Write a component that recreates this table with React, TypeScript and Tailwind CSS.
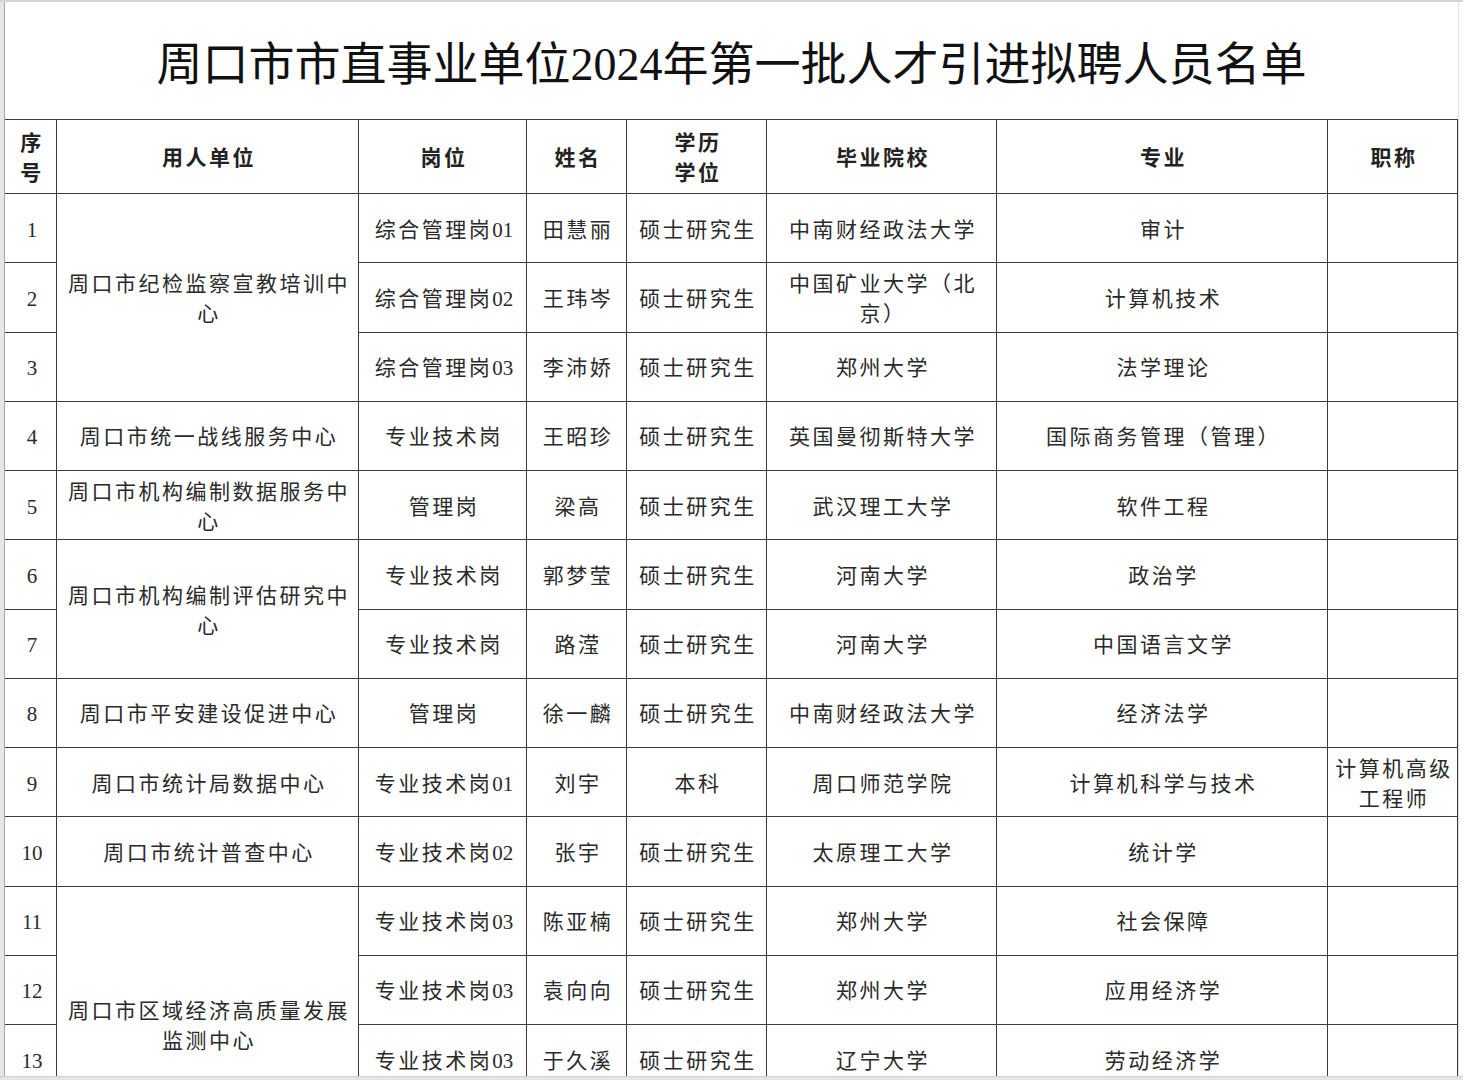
import React from "react";

type Row = {
  no: number;
  unit?: string;
  span?: number;
  post: string;
  name: string;
  edu: string;
  school: string;
  major: string;
  title?: string;
};

const rows: Row[] = [
  { no: 1, unit: "周口市纪检监察宣教培训中心", span: 3, post: "综合管理岗01", name: "田慧丽", edu: "硕士研究生", school: "中南财经政法大学", major: "审计" },
  { no: 2, post: "综合管理岗02", name: "王玮岑", edu: "硕士研究生", school: "中国矿业大学（北京）", major: "计算机技术" },
  { no: 3, post: "综合管理岗03", name: "李沛娇", edu: "硕士研究生", school: "郑州大学", major: "法学理论" },
  { no: 4, unit: "周口市统一战线服务中心", span: 1, post: "专业技术岗", name: "王昭珍", edu: "硕士研究生", school: "英国曼彻斯特大学", major: "国际商务管理（管理）" },
  { no: 5, unit: "周口市机构编制数据服务中心", span: 1, post: "管理岗", name: "梁高", edu: "硕士研究生", school: "武汉理工大学", major: "软件工程" },
  { no: 6, unit: "周口市机构编制评估研究中心", span: 2, post: "专业技术岗", name: "郭梦莹", edu: "硕士研究生", school: "河南大学", major: "政治学" },
  { no: 7, post: "专业技术岗", name: "路滢", edu: "硕士研究生", school: "河南大学", major: "中国语言文学" },
  { no: 8, unit: "周口市平安建设促进中心", span: 1, post: "管理岗", name: "徐一麟", edu: "硕士研究生", school: "中南财经政法大学", major: "经济法学" },
  { no: 9, unit: "周口市统计局数据中心", span: 1, post: "专业技术岗01", name: "刘宇", edu: "本科", school: "周口师范学院", major: "计算机科学与技术", title: "计算机高级工程师" },
  { no: 10, unit: "周口市统计普查中心", span: 1, post: "专业技术岗02", name: "张宇", edu: "硕士研究生", school: "太原理工大学", major: "统计学" },
  { no: 11, unit: "周口市区域经济高质量发展监测中心", span: 4, post: "专业技术岗03", name: "陈亚楠", edu: "硕士研究生", school: "郑州大学", major: "社会保障" },
  { no: 12, post: "专业技术岗03", name: "袁向向", edu: "硕士研究生", school: "郑州大学", major: "应用经济学" },
  { no: 13, post: "专业技术岗03", name: "于久溪", edu: "硕士研究生", school: "辽宁大学", major: "劳动经济学" },
];

const cell =
  "border-r border-b border-[#3c3c3c] flex items-center justify-center text-center pl-[5px] pr-[2px] pt-[3px] leading-[30px]";

const spanClass: Record<number, string> = {
  1: "row-span-1",
  2: "row-span-2",
  3: "row-span-3",
  4: "row-span-4",
};

function Post({ text }: { text: string }) {
  const m = text.match(/^(.*?)(\d+)$/);
  if (!m) return <>{text}</>;
  return (
    <span>
      {m[1]}
      <span className="tracking-normal">{m[2]}</span>
    </span>
  );
}

export default function App() {
  return (
    <div
      className="relative w-[1463px] h-[1080px] overflow-hidden bg-white text-[#2a2a2a]"
      style={{ fontFamily: '"Liberation Serif", "Noto Sans CJK SC", serif' }}
    >
      <div className="h-[2px] bg-[#d4d4d4]" />
      <div className="flex">
        <div className="w-[5px] shrink-0 bg-[#e6e6e6] border-r border-[#a8a8a8]" />
        <div className="w-[1453px] shrink-0">
          <div className="h-[117px] flex items-center justify-center pt-[8px] text-[46px] text-[#111]">
            周口市市直事业单位2024年第一批人才引进拟聘人员名单
          </div>
          <div className="grid grid-cols-[52px_302px_168px_100px_140px_230px_331px_130px] grid-rows-[74px_repeat(14,69.25px)] border-t border-[#3c3c3c] text-[21px] tracking-[2.5px]">
            <div className={`${cell} font-semibold text-[#222]`}>
              序<br />号
            </div>
            <div className={`${cell} font-semibold text-[#222]`}>用人单位</div>
            <div className={`${cell} font-semibold text-[#222]`}>岗位</div>
            <div className={`${cell} font-semibold text-[#222]`}>姓名</div>
            <div className={`${cell} font-semibold text-[#222]`}>
              学历<br />学位
            </div>
            <div className={`${cell} font-semibold text-[#222]`}>毕业院校</div>
            <div className={`${cell} font-semibold text-[#222]`}>专业</div>
            <div className={`${cell} font-semibold text-[#222]`}>职称</div>
            {rows.map((r) => (
              <React.Fragment key={r.no}>
                <div className={`${cell} col-start-1 tracking-normal pl-0 pr-0`}>{r.no}</div>
                {r.unit && (
                  <div className={`${cell} col-start-2 ${spanClass[r.span ?? 1]}`}>{r.unit}</div>
                )}
                <div className={`${cell} col-start-3`}>
                  <Post text={r.post} />
                </div>
                <div className={`${cell} col-start-4`}>{r.name}</div>
                <div className={`${cell} col-start-5`}>{r.edu}</div>
                <div className={`${cell} col-start-6`}>{r.school}</div>
                <div className={`${cell} col-start-7`}>{r.major}</div>
                <div className={`${cell} col-start-8`}>{r.title ?? ""}</div>
              </React.Fragment>
            ))}
            <div className={`${cell} col-start-1`} />
            <div className={`${cell} col-start-3`} />
            <div className={`${cell} col-start-4`} />
            <div className={`${cell} col-start-5`} />
            <div className={`${cell} col-start-6`} />
            <div className={`${cell} col-start-7`} />
            <div className={`${cell} col-start-8`} />
          </div>
        </div>
        <div className="flex-1 border-l border-[#e0e0e0]" />
      </div>
      <div className="absolute left-0 right-0 bottom-0 h-[4px] bg-[#e4e4e4] border-t border-[#cfcfcf]" />
    </div>
  );
}
